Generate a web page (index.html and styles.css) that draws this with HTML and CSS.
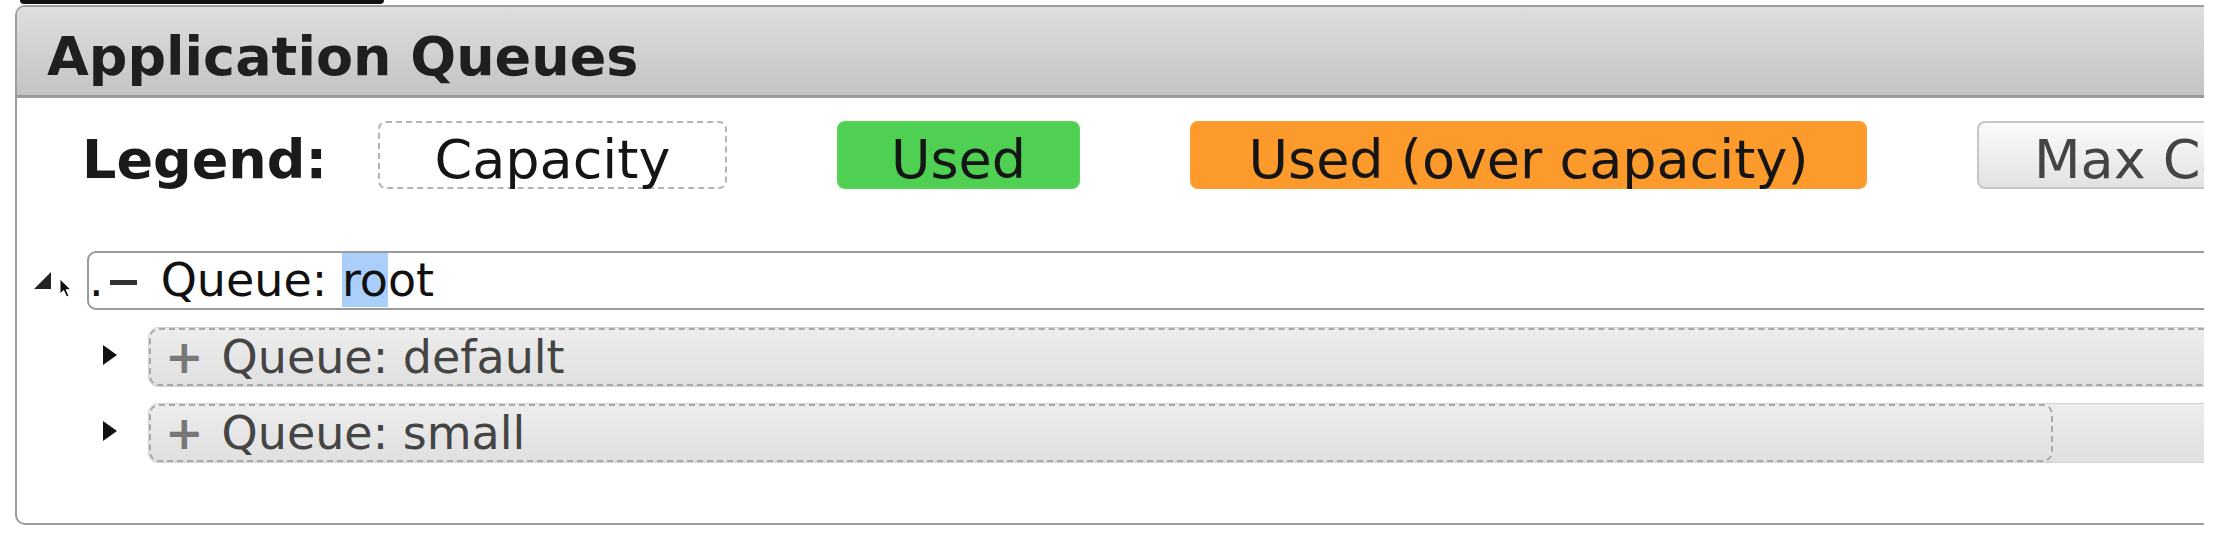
FILE: index.html
```html
<!DOCTYPE html>
<html lang="en">
<head>
<meta charset="utf-8">
<title>Application Queues</title>
<link rel="stylesheet" href="styles.css">
</head>
<body>
<div class="frame">
  <div class="topbar"></div>
  <section class="panel">
    <header class="panel-head">
      <h2 class="panel-title">Application Queues</h2>
    </header>
    <div class="legend">
      <span class="legend-label">Legend:</span>
      <span class="chip chip-cap">Capacity</span>
      <span class="chip chip-used">Used</span>
      <span class="chip chip-over">Used (over capacity)</span>
      <span class="chip chip-max">Max Capacity</span>
    </div>
    <ul class="tree">
      <li class="node node-root">
        <span class="toggle">
          <svg class="tri-open" width="17" height="17" viewBox="0 0 17 17"><polygon points="0,17 17,17 17,0" fill="#222"/></svg>
          <svg class="cursor" width="13" height="20" viewBox="0 0 13 20"><path d="M1,1 L1,16 L4.6,12.6 L7.6,19 L10,18 L7.2,11.7 L12,11.7 Z" fill="#111" stroke="#fff" stroke-width="1"/></svg>
        </span>
        <div class="qbox-root"><span class="dot">.</span><span class="minus"></span>Queue: <span class="sel">ro</span>ot</div>
      </li>
      <li class="node node-child">
        <span class="toggle">
          <svg class="tri-closed" width="14" height="20" viewBox="0 0 14 20"><polygon points="0,0 14,10 0,20" fill="#111"/></svg>
        </span>
        <div class="qmax"><div class="qcap"><span class="plus">+</span>Queue: default</div></div>
      </li>
      <li class="node node-child node-small">
        <span class="toggle">
          <svg class="tri-closed" width="14" height="20" viewBox="0 0 14 20"><polygon points="0,0 14,10 0,20" fill="#111"/></svg>
        </span>
        <div class="qmax"><div class="qcap" style="width: 1904px"><span class="plus">+</span>Queue: small</div></div>
      </li>
    </ul>
  </section>
</div>
</body>
</html>
```
FILE: styles.css
```css
html, body {
  margin: 0;
  padding: 0;
  background: #ffffff;
}

body {
  font-family: "DejaVu Sans", Verdana, sans-serif;
  color: #111;
  overflow: hidden;
}

.frame {
  width: 2204px;
  height: 538px;
  padding-left: 15px;
  box-sizing: border-box;
  overflow: hidden;
}

.topbar {
  width: 364px;
  height: 4px;
  margin-left: 5px;
  background: #111;
  border-radius: 0 0 7px 7px;
}

.panel {
  margin-top: 1px;
  width: 2400px;
  height: 520px;
  box-sizing: border-box;
  border: 2px solid #9d9d9d;
  border-radius: 10px;
  background: #fff;
}

.panel-head {
  height: 91px;
  box-sizing: border-box;
  padding: 18px 0 0 30px;
  background: linear-gradient(#dedede, #c4c4c4);
  border-bottom: 3px solid #9a9a9a;
  border-radius: 8px 8px 0 0;
}

.panel-title {
  margin: 0;
  font-size: 54px;
  line-height: 63px;
  font-weight: bold;
  color: #1f1f1f;
}

.legend {
  display: flex;
  align-items: baseline;
  gap: 110px;
  margin-top: 23px;
  padding-left: 65px;
  font-size: 54px;
}

.legend-label {
  flex: 0 0 auto;
  width: 296px;
  margin-right: -110px;
  font-weight: bold;
  line-height: 56px;
  color: #1a1a1a;
}

.chip {
  flex: 0 0 auto;
  box-sizing: border-box;
  height: 68px;
  padding: 9px 0 0;
  line-height: 56px;
  text-align: center;
  border: 2px solid transparent;
  border-radius: 8px;
  color: #151515;
}

.chip-cap {
  width: 349px;
  border: 2px dashed #b3b3b3;
}

.chip-used {
  width: 243px;
  background: #4fd052;
  border-color: #55d457;
}

.chip-over {
  width: 677px;
  background: #fd9a2c;
  border-color: #fd9c30;
}

.chip-max {
  padding-left: 55px;
  padding-right: 55px;
  color: #444;
  background: linear-gradient(#fbfbfb, #e2e2e2);
  border-color: #c6c6c6;
}

.tree {
  list-style: none;
  margin: 0;
  padding: 62px 0 0 17px;
  font-size: 46px;
}

.node {
  display: flex;
  align-items: center;
}

.toggle {
  flex: 0 0 auto;
  display: flex;
  align-items: center;
}

.node-root .toggle {
  width: 53px;
}

.cursor {
  margin-left: 8px;
  margin-top: 14px;
}

.qbox-root {
  flex: 1 1 auto;
  border: 2px solid #9a9a9a;
  border-radius: 9px;
  line-height: 55px;
  background: #fff;
  color: #111;
  white-space: nowrap;
}

.dot {
  display: inline-block;
}

.minus {
  display: inline-block;
  width: 27px;
  height: 5px;
  margin: 0 24px 0 6px;
  background: #333;
  vertical-align: 0.23em;
}

.sel {
  background: #a9cffa;
}

.node-child {
  margin-top: 17px;
  padding-left: 69px;
}

.node-small {
  margin-top: 16px;
}

.node-child .toggle {
  width: 45px;
}

.tri-closed {
  margin-bottom: 5px;
}

.qmax {
  flex: 1 1 auto;
  border: 1px solid #d2d2d2;
  border-radius: 10px;
  background: linear-gradient(#ededed, #e6e6e6 50%, #e0e0e0);
}

.qcap {
  box-sizing: border-box;
  border: 2px dashed #a9a9a9;
  border-radius: 10px;
  line-height: 54px;
  color: #444;
  white-space: nowrap;
  padding-left: 14px;
}

.plus {
  font-weight: bold;
  color: #777;
  margin-right: 18px;
}
```
